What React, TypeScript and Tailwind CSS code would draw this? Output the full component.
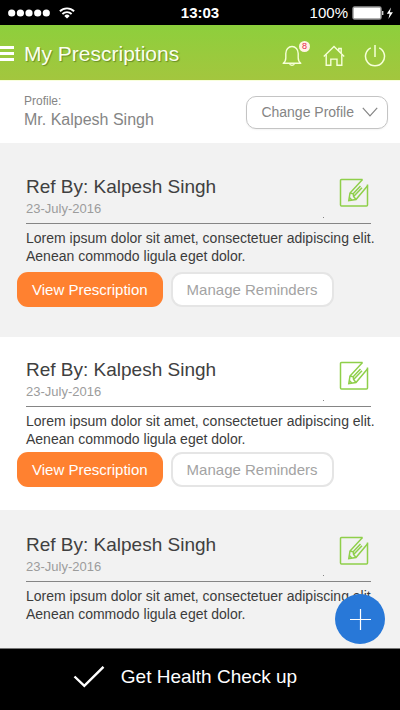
import React from "react";

type Prescription = {
  id: number;
  doctor: string;
  date: string;
  note: string;
  section: string;
  actions: string | null;
};

const NOTE =
  "Lorem ipsum dolor sit amet, consectetuer adipiscing elit. Aenean commodo ligula eget dolor.";

const prescriptions: Prescription[] = [
  { id: 1, doctor: "Kalpesh Singh", date: "23-July-2016", note: NOTE, section: "bg-[#f2f2f2] pt-8 pb-[30px]", actions: "mt-[7px]" },
  { id: 2, doctor: "Kalpesh Singh", date: "23-July-2016", note: NOTE, section: "bg-white pt-[21px] pb-[23px]", actions: "mt-1" },
  { id: 3, doctor: "Kalpesh Singh", date: "23-July-2016", note: NOTE, section: "grow bg-[#f2f2f2] pt-[23px] pb-6", actions: null },
];

function StatusBar() {
  return (
    <div className="grid h-[25px] grid-cols-3 items-center bg-black text-white">
      <div className="flex items-center gap-[9px] pl-2">
        <svg width="42" height="8" viewBox="0 0 42 8" fill="currentColor" aria-hidden="true">
          <circle cx="3.7" cy="4" r="3.6" />
          <circle cx="12.4" cy="4" r="3.6" />
          <circle cx="21" cy="4" r="3.6" />
          <circle cx="29.7" cy="4" r="3.6" />
          <circle cx="38.3" cy="4" r="3.6" />
        </svg>
        <svg width="16" height="12" viewBox="0 0 16 12" fill="none" stroke="currentColor" strokeWidth="1.9" aria-hidden="true">
          <path d="M0.9 4.3a10.2 10.2 0 0 1 14.2 0" />
          <path d="M3.4 7a6.6 6.6 0 0 1 9.2 0" />
          <path d="M8 11.6 5.3 8.9a3.9 3.9 0 0 1 5.4 0z" fill="currentColor" stroke="none" />
        </svg>
      </div>
      <span className="text-center text-[15px] leading-5 font-bold">13:03</span>
      <div className="flex items-center justify-end pr-[6px]">
        <span className="mr-1 text-[15px] leading-5">100%</span>
        <svg width="42" height="14" viewBox="0 0 42 14" aria-hidden="true">
          <rect x="1" y="1" width="28" height="12" rx="1.5" fill="#fff" stroke="#999" strokeWidth="1.4" />
          <path d="M30 5h1.400v4H30z" fill="#ccc" />
          <path d="M39 1.400 34.800 7.800h2.800L36.400 13l4.500-6.800h-3z" fill="#fff" />
        </svg>
      </div>
    </div>
  );
}

function Header() {
  return (
    <header className="flex h-[55px] items-center bg-linear-to-b from-[#8dcf3c] to-[#a3c63e] pt-[2px] pr-[14px] text-white">
      <button type="button" aria-label="Menu" className="mr-[10px]">
        <svg width="14" height="15" viewBox="0 0 14 15" fill="currentColor" className="block">
          <path d="M0 0h14v3H0zM0 6h14v3H0zM0 12h14v3H0z" />
        </svg>
      </button>
      <h1 className="grow text-[21px] leading-7 font-normal text-[#fbfff0] [text-shadow:1px_1px_1px_rgba(70,100,20,0.6)]">
        My Prescriptions
      </h1>
      <div className="flex items-center gap-[19px] pt-[5px] text-[#f6ffd8]">
        <button type="button" aria-label="Notifications" className="relative mr-[2px]">
          <svg width="20" height="22" viewBox="0 0 20 22" fill="none" stroke="currentColor" strokeWidth="1.400" className="block">
            <path d="M1.200 18.300h17.600c-2-1.400-2.600-3-2.600-5.500V8.500C16.200 4.500 13.500 1.500 10 1.500S3.800 4.500 3.800 8.500v4.300c0 2.500-.6 4.100-2.600 5.500z" strokeLinejoin="round" />
            <path d="M7.600 18.500c.3 2.400 4.500 2.400 4.800 0" />
          </svg>
          <span className="absolute -top-1 left-[17px] flex size-[11px] items-center justify-center rounded-full bg-[#fff3e4] text-[9px] leading-none text-[#e8204f]">
            8
          </span>
        </button>
        <button type="button" aria-label="Home">
          <svg width="22" height="22" viewBox="0 0 22 22" fill="none" stroke="currentColor" strokeWidth="1.400" className="block">
            <path d="M.8 11.500 11 1.500l10.200 10M15.800 6V3.500h2.400v5" />
            <path d="M3.200 9.500v10.800h4.600v-6.200h6.200v6.200h4.800V9.500" />
          </svg>
        </button>
        <button type="button" aria-label="Log out">
          <svg width="22" height="22" viewBox="0 0 22 22" fill="none" stroke="currentColor" strokeWidth="1.500" className="block">
            <path d="M6.800 2.800a9.500 9.500 0 1 0 8.400 0" />
            <path d="M11 0v12" />
          </svg>
        </button>
      </div>
    </header>
  );
}

function ProfileBar() {
  return (
    <section className="relative flex h-[63px] items-center justify-between border-t border-[#f8ffdc] bg-white pr-3 pl-6 text-[#858585]">
      <div>
        <p className="text-xs leading-4">Profile:</p>
        <p className="text-base leading-[22px]">Mr. Kalpesh Singh</p>
      </div>
      <button
        type="button"
        className="flex h-[33px] items-center gap-2 rounded-[10px] border border-[#c4c4c4] bg-white pr-[9px] pl-[14px] text-sm leading-5 shadow-xs"
      >
        Change Profile
        <svg width="16" height="10" viewBox="0 0 16 10" fill="none" stroke="currentColor" strokeWidth="1.200" aria-hidden="true">
          <path d="M.8.8 8 8.800 15.200.8" />
        </svg>
      </button>
      <svg width="16" height="8" viewBox="0 0 16 8" className="absolute top-full left-1/2 -ml-4" aria-hidden="true">
        <path d="M0 0h16L8 8z" fill="#fff" />
      </svg>
    </section>
  );
}

function EditIcon() {
  return (
    <svg width="30" height="30" viewBox="0 0 30 30" fill="none" stroke="#8fcf4a" strokeWidth="1.500" className="block">
      <path d="M23.500 1.500H2.500a1 1 0 0 0-1 1V27a1 1 0 0 0 1 1H27.500a1 1 0 0 0 1-1V6.500" />
      <path d="M23.500 1.500 11 15 9.800 22.500 17 21.500 28.800 7.500" />
      <path d="M11 15l3.200.8.400 2.600 2.400 3.100M14.200 15.800 21.500 8M14.600 18.400 23 9.800M10.400 19.500l2.400 2.600" />
    </svg>
  );
}

function PrescriptionCard({ item }: { item: Prescription }) {
  return (
    <article className={item.section}>
      <div className="pr-[29px] pl-[26px]">
        <div className="flex items-start justify-between border-b border-[#858585] pb-[5px]">
          <div>
            <h2 className="text-[19px] leading-6 font-normal text-[#404040]">Ref By: {item.doctor}</h2>
            <p className="text-[13px] leading-[19px] text-[#9c9c9c]">{item.date}</p>
          </div>
          <div className="flex w-12 flex-col gap-[9px] pt-[3px] pr-[2px]">
            <button type="button" aria-label="Edit prescription" className="self-end">
              <EditIcon />
            </button>
            <span className="size-px bg-[#858585]" />
          </div>
        </div>
        <p className="-mr-4 pt-[5px] text-sm leading-[18px] text-[#3c3c3c]">{item.note}</p>
      </div>
      {item.actions !== null && (
        <div className={item.actions}>
          <div className="flex gap-2 pl-[17px]">
            <button type="button" className="h-[35px] rounded-[11px] bg-[#ff8130] px-[15px] text-[15px] leading-5 text-white">
              View Prescription
            </button>
            <button type="button" className="h-[35px] rounded-[11px] border-2 border-[#e5e5e5] bg-white px-[14px] text-[15px] leading-5 text-[#a3a3a3]">
              Manage Reminders
            </button>
          </div>
        </div>
      )}
    </article>
  );
}

export default function App() {
  return (
    <div className="flex min-h-screen flex-col bg-white font-['Liberation_Sans',Arial,sans-serif]">
      <StatusBar />
      <Header />
      <ProfileBar />
      <main className="relative flex grow flex-col">
        {prescriptions.map((item) => (
          <PrescriptionCard key={item.id} item={item} />
        ))}
        <button
          type="button"
          aria-label="Add prescription"
          className="absolute right-[15px] bottom-1 flex size-[50px] items-center justify-center rounded-full bg-[#2878d8] text-white"
        >
          <svg width="21" height="21" viewBox="0 0 21 21" stroke="currentColor" strokeWidth="1.200">
            <path d="M10.500 0v21M0 10.500h21" />
          </svg>
        </button>
      </main>
      <button
        type="button"
        className="flex h-[62px] items-center justify-center gap-4 border-t border-[#777] bg-black pr-[30px] pb-[5px] text-[19px] leading-6 text-white"
      >
        <svg width="32" height="22" viewBox="0 0 32 22" fill="none" stroke="currentColor" strokeWidth="2.400" aria-hidden="true">
          <path d="M1.500 10.500 11.300 19.800 30.500.8" />
        </svg>
        Get Health Check up
      </button>
    </div>
  );
}
